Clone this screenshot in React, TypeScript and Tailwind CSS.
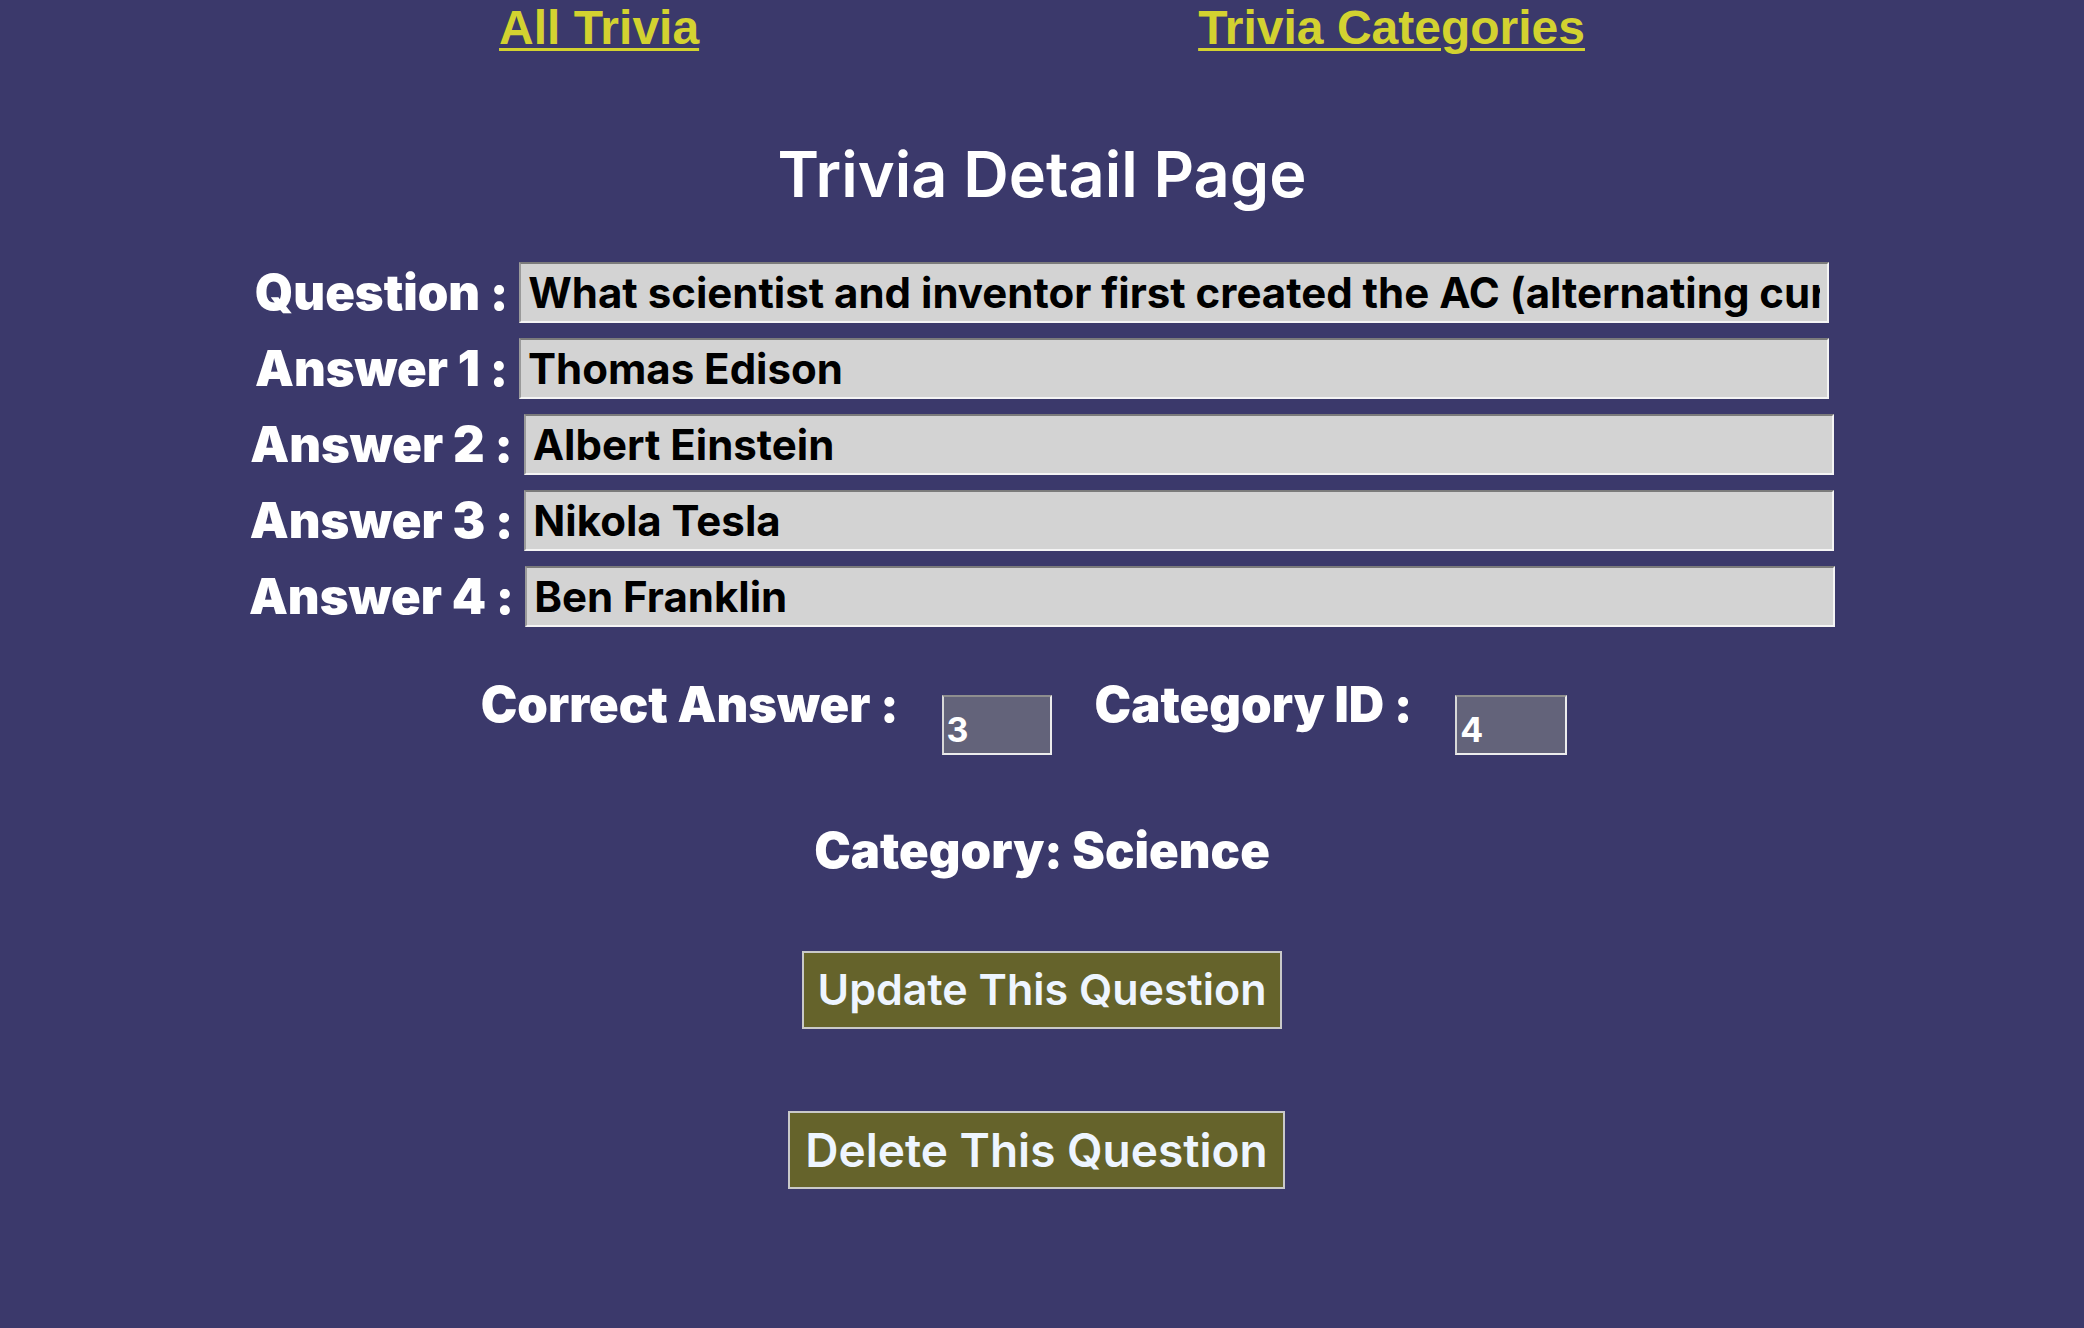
import React from 'react'

const rows = [
	{ label: 'Question :', value: 'What scientist and inventor first created the AC (alternating current) motor?' },
	{ label: 'Answer 1 :', value: 'Thomas Edison' },
	{ label: 'Answer 2 :', value: 'Albert Einstein' },
	{ label: 'Answer 3 :', value: 'Nikola Tesla' },
	{ label: 'Answer 4 :', value: 'Ben Franklin' },
]

const labelCls = "text-[49px] leading-[1.21] font-black text-white whitespace-nowrap [font-feature-settings:'calt'_0]"
const linkCls =
	"font-['Liberation_Sans',Arial,sans-serif] font-bold text-[48px] leading-[1.15] text-[#d3d230] underline decoration-[3px] underline-offset-[4px]"
const smallInput =
	'mt-[20px] h-[60px] bg-[#63637a] text-white text-[34px] font-bold px-[3px] pt-[8px] border-2 border-t-[#8e8e8e] border-l-[#d8d8d8] border-b-[#ececec] border-r-[#ececec] outline-none'

const App: React.FC = () => (
	<div className="min-h-screen w-full bg-[#3b396b] font-['Inter',sans-serif] flex flex-col items-center">
		<nav className="w-full flex justify-evenly">
			<a href="#" className={linkCls}>
				All Trivia
			</a>
			<a href="#" className={linkCls}>
				Trivia Categories
			</a>
		</nav>

		<h1 className="mt-[81px] text-[63px] leading-[1.21] font-semibold text-white">Trivia Detail Page</h1>

		<form className="mt-[50px] flex flex-col gap-[15px]" onSubmit={(e) => e.preventDefault()}>
			{rows.map((row) => (
				<div key={row.label} className="flex items-center justify-center gap-[11px]">
					<label className={labelCls}>{row.label}</label>
					<input
						readOnly
						value={row.value}
						className="w-[1310px] h-[61px] bg-[#d3d3d3] text-black text-[42px] font-bold px-[7px] border-2 border-t-[#7b7b7b] border-l-[#9a9a9a] border-b-[#f4f4f4] border-r-[#f4f4f4] outline-none"
					/>
				</div>
			))}
		</form>

		<div className="mt-[48px] flex items-start justify-center gap-[43px] pr-[36px]">
			<label className={labelCls}>Correct Answer :</label>
			<input readOnly value="3" className={`${smallInput} w-[110px]`} />
			<label className={labelCls}>Category ID :</label>
			<input readOnly value="4" className={`${smallInput} w-[112px]`} />
		</div>

		<h2 className={`mt-[66px] ${labelCls}`}>Category: Science</h2>

		<button className="mt-[70px] h-[78px] px-[14px] bg-[#65632b] border-2 border-[#c9c9c9] text-[43px] font-semibold text-[#eef5ff] leading-none">
			Update This Question
		</button>

		<button className="mt-[82px] mr-[11px] h-[78px] px-[15px] bg-[#65632b] border-2 border-[#c9c9c9] text-[46px] font-semibold text-[#eef5ff] leading-none">
			Delete This Question
		</button>
	</div>
)

export default App
